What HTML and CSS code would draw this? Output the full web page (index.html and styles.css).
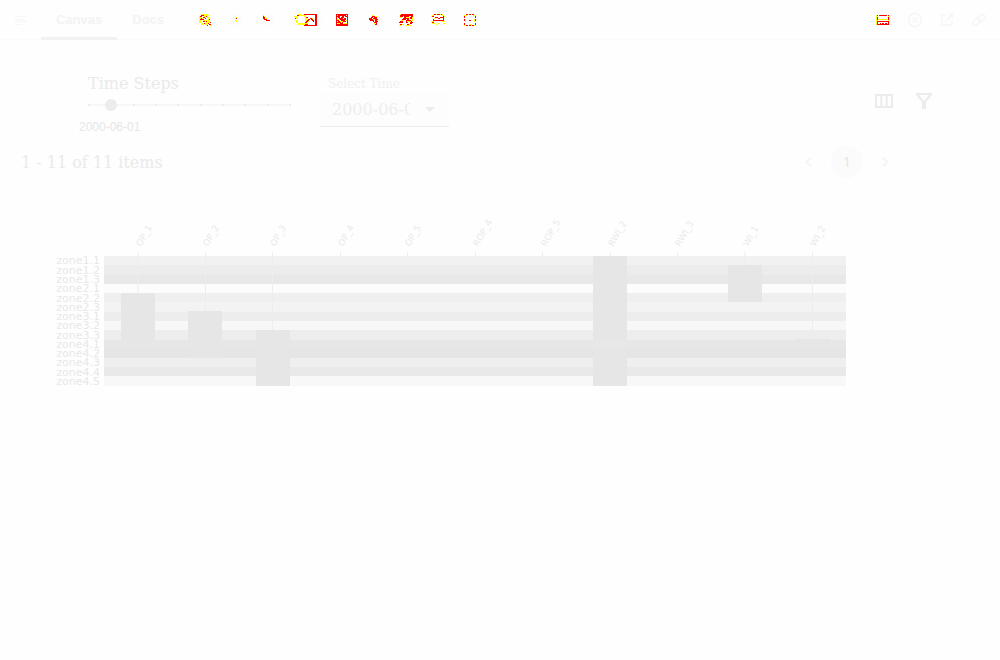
FILE: index.html
```html
<!DOCTYPE html>
<html lang="en">
<head>
<meta charset="utf-8">
<title>Canvas</title>
<link rel="stylesheet" href="styles.css">
</head>
<body>
<header class="topbar">
  <button class="icon-btn menu" aria-label="Menu"><svg width="14" height="12" viewBox="0 0 14 12"><path class="faint-line" d="M1 2.500h12M1 5.500h10M1 7.500h11M1 10.500h7"/></svg></button>
  <nav class="tabs">
    <a class="tab active" href="#canvas">Canvas</a>
    <a class="tab" href="#docs">Docs</a>
  </nav>
  <div class="tools">
    <button class="icon-btn" aria-label="Search"><svg class="pixels" width="16" height="16" viewBox="0 0 16 16"><circle class="y dash" cx="7.500" cy="7.500" r="5"/><path class="y" d="M5.500 8.500h4M9.500 5.500h2M7.500 10.500h3M10.500 10.500h2M12.500 13.500h2M4 6.500h2M7 4.500h2"/><path class="r" d="M4 3.500h3M3 4.500h2M6 5.500h2M4 6.500h1M3 7.500h4M9 4.500h1M8 6.500h1M6 9.500h2M9 9.500h1M7 11.500h1M11 11.500h1M12 12.500h2M13 10.500h1M10 13.500h1M12 7.500h1"/></svg></button>
    <button class="icon-btn" aria-label="Zoom in"><svg width="16" height="16" viewBox="0 0 16 16"><circle class="lens-line" cx="8" cy="7.500" r="5"/><path class="lens-line" d="m11.500 11 3 3"/><path class="y pixels" d="M7 5.500h1M6 6.500h1M6 8.500h2M7 9.500h1"/><path class="r pixels" d="M7 6.500h1"/></svg></button>
    <button class="icon-btn" aria-label="Zoom out"><svg width="16" height="16" viewBox="0 0 16 16"><circle class="lens-line" cx="8" cy="7.500" r="5"/><path class="lens-line" d="m11.500 11 3 3"/><path class="y pixels" d="M2 3.500h1M3 4.500h1M4 6.500h2M5 8.500h1"/><path class="r pixels" d="M2 4.500h1M2 5.500h2M2 6.500h2M3 7.500h3M5 8.500h4"/></svg></button>
    <button class="icon-btn" aria-label="Select region"><svg class="pixels wide" width="26" height="16" viewBox="0 0 26 16"><circle class="y dash" cx="8.500" cy="7.500" r="5"/><path class="y" d="M1 4.500h3M2 5.500h2M3 8.500h2M11 4.500h2M14 9.500h2M12 11.500h3M18 6.500h2"/><path class="r" d="M11 2.500h12v11H11M22.500 2v12M4 3.500h2M2 6.500h1M12 10.500h2M13 9.500h2M14 8.500h2M15 7.500h2M17 6.500h2M18 7.500h2M19 8.500h2M20 9.500h1M12 12.500h3M13 5.500h2"/></svg></button>
    <span class="divider"></span>
    <button class="icon-btn" aria-label="Image"><svg class="pixels" width="16" height="16" viewBox="0 0 16 16"><path class="y" d="M3 7.500h3M6 9.500h3M10 11.500h3M4 11.500h2M3 3.500h1M12 8.500h1"/><path class="r" d="M2.500 2.500h11v11h-11zM4 3.500h8M3 4.500h3M8 4.500h2M11 4.500h2M4 5.500h2M7 5.500h3M5 6.500h4M10 6.500h2M6 7.500h6M3 8.500h2M7 8.500h4M4 9.500h2M9 9.500h3M3 10.500h4M8 10.500h1M6 11.500h3M3 12.500h10"/></svg></button>
    <button class="icon-btn" aria-label="Effects"><svg class="pixels" width="16" height="16" viewBox="0 0 16 16"><path class="y" d="M6 3.500h2M9 4.500h2M7 7.500h2M10 8.500h2M8 11.500h1M11 11.500h1"/><path class="r" d="M6 4.500h3M5 5.500h2M8 5.500h3M3 6.500h3M7 6.500h4M3 7.500h4M9 7.500h3M4 8.500h4M9 8.500h2M7 9.500h1M9 9.500h3M8 10.500h3M10 11.500h1M9 12.500h2"/></svg></button>
    <button class="icon-btn" aria-label="Shape"><svg class="pixels" width="16" height="16" viewBox="0 0 16 16"><path class="y" d="M2 2.500h1M2 5.500h2M8 5.500h3M3 8.500h3M10 9.500h3M4 12.500h2M8 13.500h6M1 13.500h2M14.500 4v5"/><path class="r" d="M3 2.500h12M2 3.500h13M2 4.500h3M6 4.500h5M13 4.500h2M6 5.500h2M12 5.500h2M5 6.500h6M12 6.500h2M4 7.500h4M9 7.500h2M8 8.500h5M2 9.500h3M8 9.500h1M13 9.500h1M1 10.500h4M8 10.500h2M12 10.500h3M2 12.500h2M9 12.500h2M12 11.500h2"/></svg></button>
    <button class="icon-btn" aria-label="Annotate"><svg class="pixels" width="16" height="16" viewBox="0 0 16 16"><path class="y" d="M3 2.500h10M2 3.500h2M12 3.500h2M1 4.500h1M14 4.500h1M3 6.500h2M1 9.500h3M12 9.500h3M2 11.500h3M6 12.500h1M8 11.500h2M11 12.500h1M13 11.500h2"/><path class="r" d="M4 2.500h2M7 2.500h3M11 2.500h1M2 4.500h2M5 5.500h3M10 5.500h3M13 4.500h1M8 6.500h2M13.500 5v4M3.500 7v2M4 8.500h9M2 10.500h2"/></svg></button>
    <button class="icon-btn" aria-label="Fit to screen"><svg class="pixels" width="16" height="16" viewBox="0 0 16 16"><path class="y" d="M2.500 5v-1.500h2M11 3.500h2.500v2M2.500 11v2.500h2M11 13.500h2.500v-2M3.500 7v3M12.500 7v3M7 12.500h3"/><path class="r" d="M4 2.500h2M7 2.500h2M10 2.500h2M2.500 4v2M13.500 4v2M2.500 7v2M13.500 7v2M2.500 11v2M13.500 11v2M4 13.500h2M7 13.500h2M10 13.500h2M7 8.500h2"/></svg></button>
  </div>
  <div class="actions">
    <button class="icon-btn" aria-label="Keyboard"><svg class="pixels" width="16" height="16" viewBox="0 0 16 16"><path class="y wide-line" d="M2 3v10M14 3v10"/><path class="y" d="M3 7.500h10"/><path class="r" d="M2 3.500h1M4 3.500h8M13 3.500h1M2.500 5v3M13.500 5v3M2.500 9.500h11v3h-11zM5 11.500h1M7 11.500h2M10 11.500h2"/></svg></button>
    <button class="icon-btn" aria-label="Close"><svg width="16" height="16" viewBox="0 0 16 16"><circle class="pale-line" cx="8" cy="8" r="6.500"/><path class="pale-line" d="m5.500 5.500 5 5m0-5-5 5"/></svg></button>
    <button class="icon-btn" aria-label="Open in new window"><svg width="16" height="16" viewBox="0 0 16 16"><path class="pale-line" d="M7 3H3v10h10V9M9 2.500h4.500V7M13 3 7 9"/></svg></button>
    <button class="icon-btn" aria-label="Copy link"><svg width="16" height="16" viewBox="0 0 16 16"><g transform="rotate(-45 8 8)"><rect class="pale-line" x="1" y="5" width="8" height="5" rx="2.500"/><rect class="pale-line" x="7" y="6" width="8" height="5" rx="2.500"/></g></svg></button>
  </div>
</header>
<main>
  <section class="controls">
    <div class="slider-field">
      <label for="step">Time Steps</label>
      <div class="slider-track">
        <input id="step" type="range" min="0" max="9" value="1">
        <div class="marks"><i></i><i></i><i></i><i></i><i></i><i></i><i></i><i></i><i></i><i></i></div>
      </div>
      <output for="step">2000-06-01</output>
    </div>
    <div class="select-field">
      <label for="time">Select Time</label>
      <div class="select-box">
        <select id="time"><option>2000-06-01</option></select>
        <svg class="caret" width="10" height="5" viewBox="0 0 10 5"><path d="M0 0h10L5 5z"/></svg>
      </div>
    </div>
    <div class="view-actions">
      <button class="view-btn" aria-label="Columns"><svg width="24" height="24" viewBox="0 0 24 24"><path class="solid-line" d="M4 6h16v12H4zM9.300 6v12M14.700 6v12"/></svg></button>
      <button class="view-btn" aria-label="Filter"><svg width="24" height="24" viewBox="0 0 24 24"><path class="solid-fill" fill-rule="evenodd" d="M4 4h16v2l-6 7v7h-4v-7L4 6zM7 6l5 6 5-6z"/></svg></button>
    </div>
  </section>
  <section class="summary">
    <p>1 - 11 of 11 items</p>
    <nav class="pager">
      <button class="page-arrow" aria-label="Previous page"><svg width="8" height="12" viewBox="0 0 8 12"><path class="arrow-line" d="M6 1.500 1.500 6 6 10.500"/></svg></button>
      <button class="page">1</button>
      <button class="page-arrow" aria-label="Next page"><svg width="8" height="12" viewBox="0 0 8 12"><path class="arrow-line" d="M2 1.500 6.500 6 2 10.500"/></svg></button>
    </nav>
  </section>
  <svg class="chart" viewBox="0 210 1000 190" role="img" aria-label="Zones by well">
    <g class="zones">
      <text x="100" y="264">zone1.1</text><text x="100" y="274">zone1.2</text><text x="100" y="283">zone1.3</text><text x="100" y="292">zone2.1</text><text x="100" y="302">zone2.2</text><text x="100" y="311">zone2.3</text><text x="100" y="320">zone3.1</text><text x="100" y="329">zone3.2</text><text x="100" y="339">zone3.3</text><text x="100" y="348">zone4.1</text><text x="100" y="357">zone4.2</text><text x="100" y="366">zone4.3</text><text x="100" y="376">zone4.4</text><text x="100" y="385">zone4.5</text>
    </g>
    <g class="bands">
      <rect x="104" y="256" width="742" height="9" fill="#f1f1f1"/><rect x="104" y="265" width="742" height="10" fill="#ececec"/><rect x="104" y="275" width="742" height="9" fill="#e8e8e8"/><rect x="104" y="284" width="742" height="9" fill="#fcfcfc"/><rect x="104" y="293" width="742" height="9" fill="#efefef"/><rect x="104" y="302" width="742" height="10" fill="#f3f3f3"/><rect x="104" y="312" width="742" height="9" fill="#ededed"/><rect x="104" y="321" width="742" height="9" fill="#f7f7f7"/><rect x="104" y="330" width="742" height="10" fill="#ededed"/><rect x="104" y="340" width="742" height="9" fill="#e7e7e7"/><rect x="104" y="349" width="742" height="9" fill="#e5e5e5"/><rect x="104" y="358" width="742" height="9" fill="#efefef"/><rect x="104" y="367" width="742" height="9" fill="#e9e9e9"/><rect x="104" y="376" width="742" height="10" fill="#f8f8f8"/>
    </g>
    <path class="ticks" d="M138 252v41M205.500 252v60M272.500 252v78M340.500 252v4M407.500 252v4M475.500 252v4M542.500 252v4M610.500 252v4M677.500 252v4M745 252v13M812.500 252v88"/>
    <g class="bars">
      <rect x="121" y="293" width="34" height="56"/><rect x="188" y="311" width="34" height="47"/><rect x="256" y="330" width="34" height="56"/><rect x="593" y="256" width="34" height="84"/><rect x="593" y="349" width="34" height="37"/><rect x="728" y="265" width="34" height="37"/><rect x="796" y="339" width="34" height="10"/>
    </g>
    <g class="wells">
      <text transform="translate(141 247) rotate(-60)">OP_1</text><text transform="translate(208 247) rotate(-60)">OP_2</text><text transform="translate(275 247) rotate(-60)">OP_3</text><text transform="translate(343 247) rotate(-60)">OP_4</text><text transform="translate(410 247) rotate(-60)">OP_5</text><text transform="translate(478 247) rotate(-60)">ROP_4</text><text transform="translate(546 247) rotate(-60)">ROP_5</text><text transform="translate(613 247) rotate(-60)">RWI_2</text><text transform="translate(680 247) rotate(-60)">RWI_3</text><text transform="translate(748 247) rotate(-60)">WI_1</text><text transform="translate(815 247) rotate(-60)">WI_2</text>
    </g>
  </svg>
</main>
</body>
</html>
```
FILE: styles.css
```css
* { box-sizing: border-box; }
body {
  margin: 0;
  min-height: 100vh;
  background: #fefefe;
  color: #eaeaea;
  font-family: "DejaVu Serif", serif;
  font-size: 16px;
}
button {
  border: 0;
  padding: 0;
  background: none;
  color: inherit;
}
svg { display: block; }
.topbar {
  display: flex;
  align-items: center;
  height: 40px;
  padding-right: 5px;
  border-bottom: 1px solid #fafafa;
  background: #fefefe;
}
.icon-btn {
  display: flex;
  align-items: center;
  justify-content: center;
  flex: none;
  width: 32px;
  height: 32px;
}
.menu { width: 41px; }
.tabs { display: flex; align-self: stretch; }
.tab {
  display: flex;
  align-items: center;
  height: 40px;
  padding: 3px 15px 0;
  border-bottom: 3px solid transparent;
  color: #f3f3f3;
  font: bold 13px/18px "Liberation Sans", sans-serif;
  text-decoration: none;
}
.tab.active { border-bottom-color: #f1f1f1; }
.tools { display: flex; align-items: center; margin-left: 10px; }
.divider { width: 1px; height: 18px; margin: 0 4px; background: #fbfbfb; }
.actions { display: flex; margin-left: auto; }
.pixels { shape-rendering: crispEdges; overflow: visible; }
.wide { margin-left: 10px; flex: none; }
.y { fill: none; stroke: #ffff00; stroke-width: 1; }
.r { fill: none; stroke: #ff0000; stroke-width: 1; }
.dash { stroke-width: 2; stroke-dasharray: 3 1; }
.wide-line { stroke-width: 2; }
.pale-line { fill: none; stroke: #f6f6f6; stroke-width: 1.5; }
.lens-line { fill: none; stroke: #fafafa; stroke-width: 1.5; }
.faint-line { fill: none; stroke: #f7f7f7; }
.solid-line { fill: none; stroke: #ececec; stroke-width: 2; }
.solid-fill { fill: #ececec; }
.arrow-line { fill: none; stroke: #f5f5f5; stroke-width: 2; }

.controls {
  display: flex;
  align-items: flex-start;
  padding: 34px 64px 0 88px;
}
.slider-field { width: 203px; }
.slider-field label { display: block; line-height: 20px; }
.slider-track { position: relative; height: 12px; margin-top: 5px; }
.slider-track input {
  display: block;
  appearance: none;
  width: calc(100% + 12px);
  height: 12px;
  margin: 0 -6px;
  background: linear-gradient(#f7f7f7, #f7f7f7) center / calc(100% - 12px) 2px no-repeat;
}
.slider-track input::-webkit-slider-thumb {
  appearance: none;
  width: 12px;
  height: 12px;
  border-radius: 50%;
  background: #ececec;
}
.marks {
  position: absolute;
  inset: 5px 0 auto;
  display: flex;
  justify-content: space-between;
  pointer-events: none;
}
.marks i { width: 2px; height: 2px; background: #ececec; }
.slider-field output {
  display: block;
  width: 62px;
  margin: 8px 0 0 -9px;
  font: 12px/16px "Liberation Sans", sans-serif;
  color: #e6e6e6;
}
.select-field { width: 129px; margin-left: 29px; }
.select-field label {
  display: block;
  padding: 2px 8px 0;
  font-size: 12px;
  line-height: 16px;
  color: #f0f0f0;
}
.select-box { position: relative; height: 35px; }
.select-box select {
  appearance: none;
  width: 100%;
  height: 100%;
  padding: 2px 39px 0 12px;
  border: 0;
  border-bottom: 1px solid #ebebeb;
  border-radius: 4px 4px 0 0;
  background: #fdfdfd;
  color: #eeeeee;
  font: 16px/20px "DejaVu Serif", serif;
}
.caret { position: absolute; right: 14px; top: 15px; fill: #ececec; pointer-events: none; }
.view-actions { display: flex; gap: 16px; margin: 15px 0 0 auto; }
.view-btn { width: 24px; height: 24px; }
.summary {
  display: flex;
  align-items: center;
  justify-content: space-between;
  height: 32px;
  margin: 11px 111px 0 21px;
}
.summary p { margin: 0; padding-top: 2px; line-height: 20px; }
.pager { display: flex; align-items: center; gap: 18px; }
.page {
  width: 32px;
  height: 32px;
  border-radius: 50%;
  background: #fbfbfb;
  color: #e6e6e6;
  font: 14px/20px "Noto Sans", sans-serif;
}
.page-arrow { width: 8px; height: 12px; }
.chart { width: 100%; height: auto; margin-top: 32px; }
.zones { font: 11px "DejaVu Sans", sans-serif; fill: #e8e8e8; text-anchor: end; }
.wells { font: 9px "DejaVu Sans", sans-serif; fill: #eaeaea; }
.bands { shape-rendering: crispEdges; }
.ticks { fill: none; stroke: #ededed; }
.bars { fill: #e6e6e6; }
```
